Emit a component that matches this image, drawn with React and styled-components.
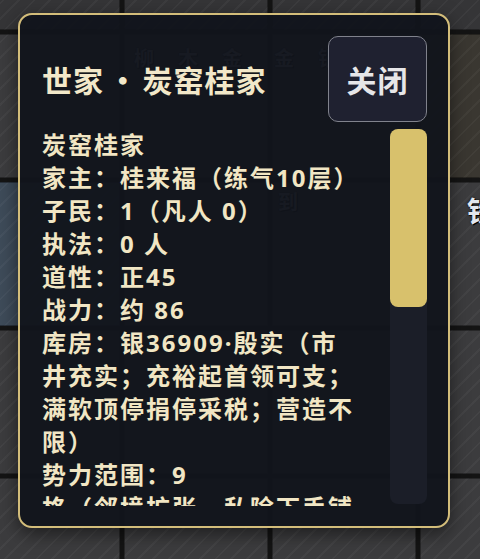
import React from 'react';
import styled, { createGlobalStyle } from 'styled-components';

const GlobalStyle = createGlobalStyle`
  html, body {
    margin: 0;
    padding: 0;
    background: #141414;
  }
  body {
    font-family: "Noto Sans CJK SC", "Noto Sans", sans-serif;
    overflow: hidden;
  }
`;

const Stage = styled.div`
  position: relative;
  width: 480px;
  height: 559px;
  overflow: hidden;
  background: #141414;
`;

const MapGrid = styled.div`
  display: grid;
  grid-template-columns: repeat(4, 144px);
  grid-auto-rows: 144px;
  gap: 4px;
  margin: -114px 0 0 -24px;
`;

const tones = {
  stone: '#3c3c3e',
  water: '#3e4b59',
  soil: '#3a3731',
  dark: '#353537',
};

const Tile = styled.div`
  box-sizing: border-box;
  padding: ${(p) => p.$pad || '0'};
  display: flex;
  gap: 24px;
  background-color: ${(p) => tones[p.$tone]};
  background-image: repeating-linear-gradient(
    135deg,
    rgba(255, 255, 255, 0.035) 0 2px,
    transparent 2px 11px
  );
  box-shadow: inset 0 0 0 1px rgba(0, 0, 0, 0.35);
`;

const TileLabel = styled.span`
  font-size: ${(p) => p.$size || 20}px;
  font-weight: 700;
  line-height: 1;
  color: ${(p) => (p.$dim ? '#8a8e98' : '#e2e6ef')};
  white-space: nowrap;
  text-shadow: 0 0 2px #000, 1px 1px 0 #000;
`;

const Panel = styled.section`
  position: absolute;
  left: 18px;
  top: 13px;
  width: 432px;
  height: 515px;
  box-sizing: border-box;
  padding: 21px 21px 20px 22px;
  display: flex;
  flex-direction: column;
  border: 2.5px solid #d3bd7a;
  border-radius: 14px;
  background: rgba(17, 20, 27, 0.95);
  box-shadow: 0 6px 18px rgba(0, 0, 0, 0.5);
`;

const Header = styled.header`
  display: flex;
  align-items: center;
  justify-content: space-between;
  height: 86px;
`;

const Title = styled.h2`
  margin: 0;
  font-size: 30px;
  font-weight: 700;
  letter-spacing: 1px;
  word-spacing: -4px;
  color: #f2e8c9;
`;

const CloseButton = styled.button`
  width: 99px;
  height: 86px;
  box-sizing: border-box;
  border: 1.5px solid #80828c;
  border-radius: 10px;
  background: #1f2130;
  color: #e6e6e8;
  font-family: inherit;
  font-size: 30px;
  font-weight: 700;
  letter-spacing: 1px;
  cursor: pointer;
`;

const Body = styled.div`
  flex: 1;
  min-height: 0;
  display: flex;
  gap: 27px;
  margin-top: 6px;
`;

const Content = styled.div`
  flex: 1;
  min-width: 0;
  overflow: hidden;
`;

const Line = styled.p`
  margin: 0;
  font-family: "Noto Sans", "Noto Sans CJK SC", sans-serif;
  font-size: 24px;
  line-height: 33px;
  font-weight: 700;
  letter-spacing: 2px;
  color: #f1e6c4;
`;

const Track = styled.div`
  width: 37px;
  margin: 1px 0 2px;
  border-radius: 8px;
  background: #1b1e28;
`;

const Thumb = styled.div`
  height: 178px;
  border-radius: 8px;
  background: #d8c16c;
`;

const map = [
  ['dark', 'dark', 'dark', 'dark'],
  ['stone', 'stone', 'stone', 'soil'],
  ['water', 'stone', 'stone', 'stone'],
  ['stone', 'stone', 'stone', 'stone'],
  ['stone', 'stone', 'stone', 'stone'],
];

const labels = {
  '1-1': { pad: '14px 0 0 10px', size: 20, dim: true, text: ['柳', '木', '金'] },
  '1-2': { pad: '14px 0 0 2px', size: 20, dim: true, text: ['金', '银'] },
  '2-2': { pad: '10px 0 0 6px', size: 20, dim: true, text: ['到'] },
  '2-3': { pad: '14px 0 0 47px', size: 28, text: ['铁'] },
};

const lines = [
  '炭窑桂家',
  '家主：桂来福（练气10层）',
  '子民：1（凡人 0）',
  '执法：0 人',
  '道性：正45',
  '战力：约 86',
  '库房：银36909·殷实（市井充实；充裕起首领可支；满软顶停捐停采税；营造不限）',
  '势力范围：9',
  '格（邻境扩张，私除下手铺垫，外患未起）',
];

const App = () => {
  return (
    <Stage>
      <GlobalStyle />
      <MapGrid>
        {map.map((row, r) =>
          row.map((tone, c) => {
            const label = labels[`${r}-${c}`];
            return (
              <Tile key={`${r}-${c}`} $tone={tone} $pad={label && label.pad}>
                {label &&
                  label.text.map((t, i) => (
                    <TileLabel key={i} $size={label.size} $dim={label.dim}>
                      {t}
                    </TileLabel>
                  ))}
              </Tile>
            );
          })
        )}
      </MapGrid>
      <Panel>
        <Header>
          <Title>世家 · 炭窑桂家</Title>
          <CloseButton>关闭</CloseButton>
        </Header>
        <Body>
          <Content>
            {lines.map((text) => (
              <Line key={text}>{text}</Line>
            ))}
          </Content>
          <Track>
            <Thumb />
          </Track>
        </Body>
      </Panel>
    </Stage>
  );
};

export default App;
